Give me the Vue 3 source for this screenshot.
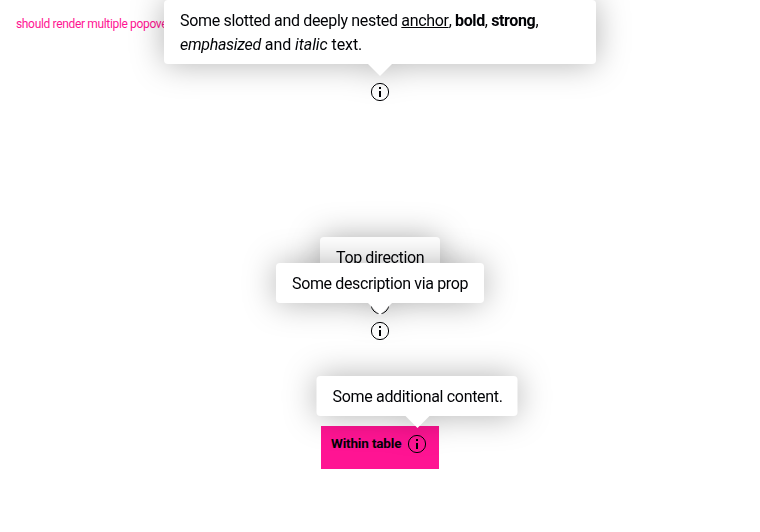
<script setup>
const popovers = [
  { id: 'slotted', rich: true },
  { id: 'direction', text: 'Top direction' },
  { id: 'description', text: 'Some description via prop' },
]
</script>

<template>
  <main class="page">
    <p class="note">should render multiple popovers</p>
    <div class="stack">
      <div v-for="p in popovers" :key="p.id" class="anchor" :class="p.id">
        <svg class="icon" viewBox="0 0 24 24">
          <circle cx="12" cy="12" r="8.6" />
          <path d="M11 7h2v2h-2zM11 11h2v6h-2z" />
        </svg>
        <div class="popover">
          <span v-if="p.rich"><span class="first">Some slotted and deeply nested <u>anchor</u></span><span>, <b>bold</b>, <strong>strong</strong>,</span><br><span class="second"><em>emphasized</em> and <i>italic</i> text.</span></span>
          <span v-else>{{ p.text }}</span>
        </div>
      </div>
    </div>
    <div class="cell">
      <span class="label">Within table</span>
      <div class="anchor table">
        <svg class="icon" viewBox="0 0 24 24">
          <circle cx="12" cy="12" r="8.6" />
          <path d="M11 7h2v2h-2zM11 11h2v6h-2z" />
        </svg>
        <div class="popover"><span>Some additional content.</span></div>
      </div>
    </div>
  </main>
</template>

<style>
body { background: #fff; }
</style>

<style scoped>
.page {
  box-sizing: border-box;
  height: 532px;
  overflow: hidden;
  display: flex;
  flex-direction: column;
  align-items: center;
  padding-top: 16px;
  font-family: Roboto, "Liberation Sans", sans-serif;
  font-size: 16px;
  line-height: 24px;
  color: #010205;
}
.note {
  align-self: flex-start;
  margin: 0 0 0 16px;
  height: 16px;
  font-size: 12px;
  line-height: 16px;
  letter-spacing: -0.34px;
  color: #ff1493;
  white-space: nowrap;
}
.stack {
  display: flex;
  flex-direction: column;
  padding-top: 48px;
}
.anchor {
  position: relative;
  width: 24px;
  height: 24px;
}
.direction { margin-top: 189px; }
.description { margin-top: 2px; }
.icon {
  display: block;
  width: 24px;
  height: 24px;
}
.icon circle {
  fill: none;
  stroke: #010205;
  stroke-width: 1;
}
.icon path { fill: #010205; }
.popover {
  position: absolute;
  z-index: 1;
  left: 50%;
  bottom: 40px;
  transform: translateX(-50%);
  box-sizing: border-box;
  width: 208px;
  padding: 9px 16px 7px;
  border-radius: 4px;
  background: #fff;
  letter-spacing: -0.37px;
  white-space: nowrap;
  filter: drop-shadow(0 0 16px rgba(0, 0, 0, 0.3));
}
.popover::after {
  content: "";
  position: absolute;
  top: 100%;
  left: 50%;
  margin-left: -12px;
  border: 12px solid transparent;
  border-top-color: #fff;
  border-bottom: 0;
}
.first { letter-spacing: -0.33px; }
.second { letter-spacing: -0.07px; }
.second em { letter-spacing: -0.3px; }
.slotted .popover { width: 432px; }
.direction .popover { width: 120px; }
.table .popover {
  width: 201px;
  letter-spacing: -0.32px;
}
.cell {
  box-sizing: border-box;
  display: flex;
  width: 118px;
  height: 43px;
  margin-top: 83px;
  padding: 6px 10px;
  background: #ff1493;
}
.label {
  width: 71px;
  margin-right: 3px;
  font-size: 13.5px;
  font-weight: 700;
  line-height: 22px;
  letter-spacing: -0.16px;
  white-space: nowrap;
}
.table { flex: none; }
</style>
